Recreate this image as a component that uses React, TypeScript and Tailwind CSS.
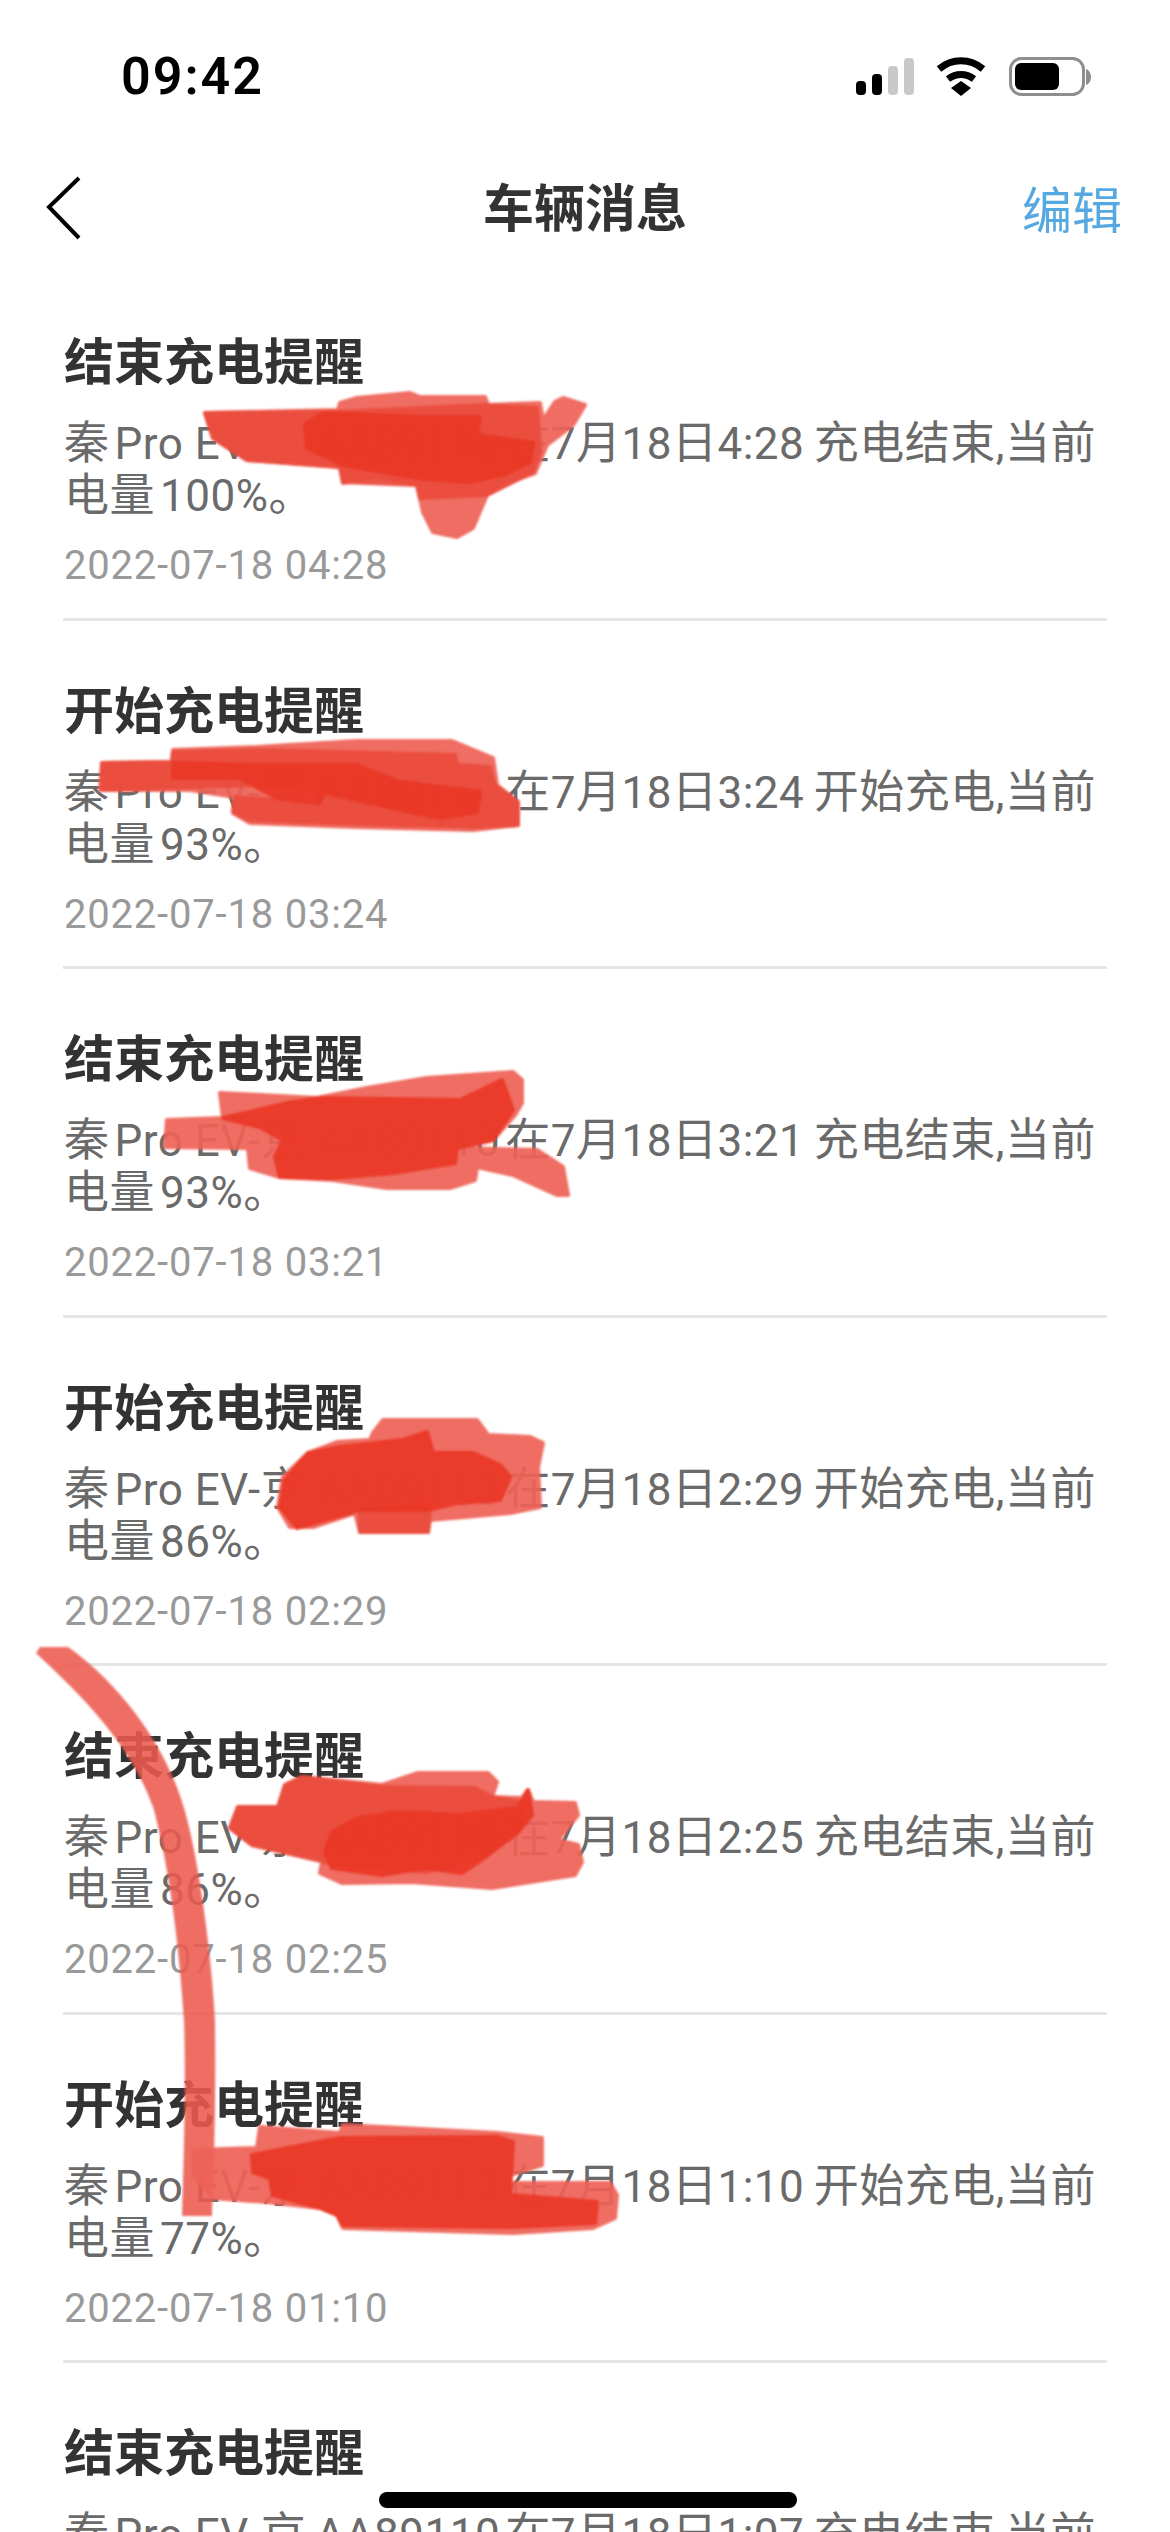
const messages = [
  { title: '结束充电提醒', head: '在7月18日4:28\u2009充电结束,当前', tail: '电量\u200a100%。', time: '2022-07-18 04:28' },
  { title: '开始充电提醒', head: '在7月18日3:24\u2009开始充电,当前', tail: '电量\u200a93%。', time: '2022-07-18 03:24' },
  { title: '结束充电提醒', head: '在7月18日3:21\u2009充电结束,当前', tail: '电量\u200a93%。', time: '2022-07-18 03:21' },
  { title: '开始充电提醒', head: '在7月18日2:29\u2009开始充电,当前', tail: '电量\u200a86%。', time: '2022-07-18 02:29' },
  { title: '结束充电提醒', head: '在7月18日2:25\u2009充电结束,当前', tail: '电量\u200a86%。', time: '2022-07-18 02:25' },
  { title: '开始充电提醒', head: '在7月18日1:10\u2009开始充电,当前', tail: '电量\u200a77%。', time: '2022-07-18 01:10' },
  { title: '结束充电提醒', head: '在7月18日1:07\u2009充电结束,当前', tail: '电量\u200a77%。', time: '2022-07-18 01:07' },
];

const LIGHT = '#ee6257';
const MID = '#ea4b3c';
const DARK = '#ea3725';

// marker scribbles drawn over the list, bottom layer first
const scribbles: [string, string][] = [
  [LIGHT, '205,413 338,410 340,403 357,398 410,393 420,397 485,397 488,405 540,403 543,420 555,402 563,398 585,405 573,425 547,445 535,473 507,483 487,495 473,528 457,537 433,532 423,512 417,485 377,477 343,483 340,467 247,460 213,438'],
  [MID, '205,413 338,412 483,405 537,408 540,452 533,472 487,495 420,498 417,485 343,482 340,467 247,460 213,438'],
  [DARK, '305,425 323,413 423,417 480,417 477,435 533,443 530,462 503,475 467,482 417,478 343,465 307,448'],

  [LIGHT, '102,763 172,762 173,750 257,747 357,741 452,741 493,758 497,785 518,802 518,825 473,830 357,827 250,823 233,813 235,797 190,790 100,790'],
  [MID, '102,763 172,762 173,752 262,750 455,755 457,765 490,767 494,785 518,802 518,825 478,827 357,824 250,820 233,812 235,797 320,803 320,790 257,785 102,790'],
  [DARK, '173,763 263,765 357,765 400,782 480,792 477,812 440,818 410,812 323,792 320,803 277,798 240,778 173,778'],

  [LIGHT, '220,1093 317,1098 367,1088 427,1078 513,1072 522,1080 522,1103 515,1115 493,1140 460,1148 537,1150 563,1167 568,1195 557,1195 513,1175 477,1167 475,1180 450,1188 387,1188 333,1180 280,1177 250,1168 248,1148 165,1147 167,1120 223,1118'],
  [DARK, '223,1118 288,1103 320,1098 460,1100 502,1080 513,1110 493,1140 457,1148 455,1163 393,1173 333,1178 280,1177 275,1157 283,1140 260,1127'],

  [LIGHT, '373,1433 383,1420 477,1420 488,1435 530,1437 543,1443 538,1467 540,1507 510,1513 430,1520 428,1532 360,1532 355,1513 313,1527 290,1527 278,1507 283,1477 308,1453 337,1442 370,1440'],
  [MID, '360,1510 430,1505 428,1532 360,1532'],
  [DARK, '308,1453 340,1447 403,1440 427,1432 433,1453 473,1453 500,1465 510,1477 500,1500 457,1503 427,1510 360,1510 297,1528 280,1507 285,1480'],

  [LIGHT, '285,1785 302,1777 382,1785 418,1773 488,1773 497,1782 492,1797 522,1798 528,1790 533,1802 575,1803 578,1815 558,1840 578,1845 582,1862 575,1875 492,1888 412,1882 342,1883 320,1873 323,1858 252,1845 230,1828 238,1807 278,1807'],
  [MID, '285,1785 302,1777 382,1787 475,1788 492,1797 522,1802 518,1832 485,1855 425,1872 325,1862 252,1845 230,1828 238,1807 278,1807'],
  [DARK, '332,1832 358,1818 398,1812 458,1815 518,1808 528,1790 532,1815 518,1832 488,1855 462,1873 425,1868 382,1875 332,1868 325,1852'],

  [LIGHT, '193,2150 257,2148 260,2127 340,2133 343,2125 497,2133 542,2138 542,2165 510,2175 508,2183 610,2183 617,2195 615,2218 593,2228 513,2233 343,2228 337,2215 320,2208 267,2202 213,2198 193,2175'],
  [DARK, '252,2155 340,2138 497,2137 513,2142 510,2195 597,2202 595,2223 513,2227 343,2225 337,2215 320,2208 273,2195 270,2178 253,2172'],
];

function StatusIcons() {
  return (
    <svg width="240" height="44" viewBox="0 0 240 44" fill="none">
      <rect x="1" y="26" width="10" height="14" rx="4" fill="#000" />
      <rect x="17" y="19" width="10" height="21" rx="4" fill="#000" />
      <rect x="33" y="11" width="10" height="29" rx="4" fill="#c8c8c8" />
      <rect x="49" y="3" width="10" height="37" rx="4" fill="#c8c8c8" />
      <path d="M84 14c13-11 31-11 44 0" stroke="#000" strokeWidth="7" />
      <path d="M93 24c8-6 18-6 26 0" stroke="#000" strokeWidth="7" />
      <path d="M96 33l10-7 10 7-10 8z" fill="#000" />
      <rect x="155.5" y="3.5" width="73" height="36" rx="11" stroke="#8e8e8e" strokeWidth="3" />
      <rect x="160" y="8" width="44" height="27" rx="6" fill="#000" />
      <path d="M231 14c3 1 5 4 5 8s-2 7-5 8z" fill="#8e8e8e" />
    </svg>
  );
}

// CJK runs sit a little larger than the latin ones, as on the phone
function BodyLine({ text }: { text: string }) {
  return (
    <div className="whitespace-nowrap tracking-[0.5px]">
      {text.split(/([\u4e00-\u9fff。]+)/).map((part, i) =>
        i % 2 === 1 ? (
          <span key={i} className="text-[45px]">{part}</span>
        ) : (
          <span key={i}>{part}</span>
        ),
      )}
    </div>
  );
}

function MessageRow({ title, head, tail, time }: (typeof messages)[number]) {
  return (
    <div className="mx-[63px] h-[348.5px] shrink-0 border-b-[3px] border-[#e6e6e6] pl-px pt-[61px]">
      <div className="h-[60px] text-[50px] leading-[60px] font-semibold text-[#333333]">{title}</div>
      <div className="mt-[25px] text-[44px] leading-[52px] text-[#6a6a6a]">
        <BodyLine text={`秦\u200aPro EV-京\u2009AA89110\u200a${head}`} />
        <BodyLine text={tail} />
      </div>
      <div className="mt-[22px] text-[40px] leading-[44px] tracking-[0.8px] text-[#999999]">{time}</div>
    </div>
  );
}

export default function App() {
  return (
    <div className="relative h-[2532px] w-[1170px] overflow-hidden bg-white font-['Roboto','Noto_Sans_CJK_SC',sans-serif]">
      <div className="flex h-[154px] items-center justify-between pl-[121px] pr-[75px]">
        <span className="text-[52px] leading-none font-semibold tracking-[2px] text-black">09:42</span>
        <StatusIcons />
      </div>

      <div className="relative flex h-[108px] items-center justify-center">
        <svg className="absolute left-[46px] top-[22px]" width="36" height="64" viewBox="0 0 36 64" fill="none">
          <path d="M33 2L3 31l30 31" stroke="#000" strokeWidth="4" />
        </svg>
        <span className="pt-[2px] text-[51px] font-semibold leading-none text-[#333333]">车辆消息</span>
        <span className="absolute right-[48px] top-[28px] text-[50px] leading-[60px] text-[#56a8e0]">编辑</span>
      </div>

      <div className="flex flex-col pt-[10px]">
        {messages.map((m, i) => (
          <MessageRow key={i} {...m} />
        ))}
      </div>

      <svg className="pointer-events-none absolute left-0 top-0 blur-[1px]" width="1170" height="2532" viewBox="0 0 1170 2532">
        <path
          d="M36 1653L40 1647L68 1647C115 1680 170 1745 188 1823C200 1870 212 1960 215 2021C216 2100 214 2170 212 2216L182 2216C184 2150 186 2080 184 2021C180 1960 172 1880 154 1810C130 1740 75 1690 36 1653Z"
          fill="#ec5a4e"
          opacity="0.88"
        />
        {scribbles.map(([color, points], i) => (
          <polygon key={i} points={points} fill={color} stroke={color} strokeWidth="4" strokeLinejoin="round" opacity="0.93" />
        ))}
      </svg>

      <div className="absolute bottom-[24px] left-[379px] h-[16px] w-[418px] rounded-full bg-black" />
    </div>
  );
}
